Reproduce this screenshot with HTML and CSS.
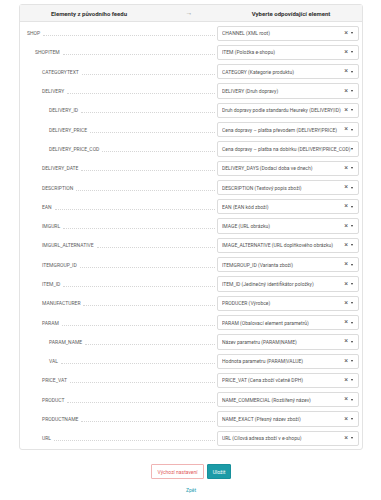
FILE: index.html
```html
<!DOCTYPE html>
<html lang="cs">
<head>
    <meta charset="UTF-8">
    <meta name="viewport" content="width=device-width, initial-scale=1.0">
    <title>Mapování feedu</title>
    <link rel="stylesheet" href="styles.css">
</head>
<body>
    <div class="page">
        <div class="card">
            <div class="card-head">
                <div>Elementy z původního feedu</div>
                <div class="head-arrow">&rarr;</div>
                <div>Vyberte odpovídající element</div>
            </div>
            <div class="rows">
                <div class="row"><div class="label lvl-0"><span>SHOP</span><i class="dots"></i></div><div class="pick"><span class="pick-text">CHANNEL (XML root)</span><b class="clear">&times;</b><b class="caret"></b></div></div>
                <div class="row"><div class="label lvl-1"><span>SHOPITEM</span><i class="dots"></i></div><div class="pick"><span class="pick-text">ITEM (Položka e-shopu)</span><b class="clear">&times;</b><b class="caret"></b></div></div>
                <div class="row"><div class="label lvl-2"><span>CATEGORYTEXT</span><i class="dots"></i></div><div class="pick"><span class="pick-text">CATEGORY (Kategorie produktu)</span><b class="clear">&times;</b><b class="caret"></b></div></div>
                <div class="row"><div class="label lvl-2"><span>DELIVERY</span><i class="dots"></i></div><div class="pick"><span class="pick-text">DELIVERY (Druh dopravy)</span><b class="clear">&times;</b><b class="caret"></b></div></div>
                <div class="row"><div class="label lvl-3"><span>DELIVERY_ID</span><i class="dots"></i></div><div class="pick"><span class="pick-text">Druh dopravy podle standardu Heureky (DELIVERY|ID)</span><b class="clear">&times;</b><b class="caret"></b></div></div>
                <div class="row"><div class="label lvl-3"><span>DELIVERY_PRICE</span><i class="dots"></i></div><div class="pick"><span class="pick-text">Cena dopravy – platba převodem (DELIVERY|PRICE)</span><b class="clear">&times;</b><b class="caret"></b></div></div>
                <div class="row"><div class="label lvl-3"><span>DELIVERY_PRICE_COD</span><i class="dots"></i></div><div class="pick pick-long"><span class="pick-text">Cena dopravy – platba na dobírku (DELIVERY|PRICE_COD)</span><b class="clear">&times;</b><b class="caret"></b></div></div>
                <div class="row"><div class="label lvl-2"><span>DELIVERY_DATE</span><i class="dots"></i></div><div class="pick"><span class="pick-text">DELIVERY_DAYS (Dodací doba ve dnech)</span><b class="clear">&times;</b><b class="caret"></b></div></div>
                <div class="row"><div class="label lvl-2"><span>DESCRIPTION</span><i class="dots"></i></div><div class="pick"><span class="pick-text">DESCRIPTION (Textový popis zboží)</span><b class="clear">&times;</b><b class="caret"></b></div></div>
                <div class="row"><div class="label lvl-2"><span>EAN</span><i class="dots"></i></div><div class="pick"><span class="pick-text">EAN (EAN kód zboží)</span><b class="clear">&times;</b><b class="caret"></b></div></div>
                <div class="row"><div class="label lvl-2"><span>IMGURL</span><i class="dots"></i></div><div class="pick"><span class="pick-text">IMAGE (URL obrázku)</span><b class="clear">&times;</b><b class="caret"></b></div></div>
                <div class="row"><div class="label lvl-2"><span>IMGURL_ALTERNATIVE</span><i class="dots"></i></div><div class="pick"><span class="pick-text">IMAGE_ALTERNATIVE (URL doplňkového obrázku)</span><b class="clear">&times;</b><b class="caret"></b></div></div>
                <div class="row"><div class="label lvl-2"><span>ITEMGROUP_ID</span><i class="dots"></i></div><div class="pick"><span class="pick-text">ITEMGROUP_ID (Varianta zboží)</span><b class="clear">&times;</b><b class="caret"></b></div></div>
                <div class="row"><div class="label lvl-2"><span>ITEM_ID</span><i class="dots"></i></div><div class="pick"><span class="pick-text">ITEM_ID (Jedinečný identifikátor položky)</span><b class="clear">&times;</b><b class="caret"></b></div></div>
                <div class="row"><div class="label lvl-2"><span>MANUFACTURER</span><i class="dots"></i></div><div class="pick"><span class="pick-text">PRODUCER (Výrobce)</span><b class="clear">&times;</b><b class="caret"></b></div></div>
                <div class="row"><div class="label lvl-2"><span>PARAM</span><i class="dots"></i></div><div class="pick"><span class="pick-text">PARAM (Obalovací element parametrů)</span><b class="clear">&times;</b><b class="caret"></b></div></div>
                <div class="row"><div class="label lvl-3"><span>PARAM_NAME</span><i class="dots"></i></div><div class="pick"><span class="pick-text">Název parametru (PARAM|NAME)</span><b class="clear">&times;</b><b class="caret"></b></div></div>
                <div class="row"><div class="label lvl-3"><span>VAL</span><i class="dots"></i></div><div class="pick"><span class="pick-text">Hodnota parametru (PARAM|VALUE)</span><b class="clear">&times;</b><b class="caret"></b></div></div>
                <div class="row"><div class="label lvl-2"><span>PRICE_VAT</span><i class="dots"></i></div><div class="pick"><span class="pick-text">PRICE_VAT (Cena zboží včetně DPH)</span><b class="clear">&times;</b><b class="caret"></b></div></div>
                <div class="row"><div class="label lvl-2"><span>PRODUCT</span><i class="dots"></i></div><div class="pick"><span class="pick-text">NAME_COMMERCIAL (Rozšířený název)</span><b class="clear">&times;</b><b class="caret"></b></div></div>
                <div class="row"><div class="label lvl-2"><span>PRODUCTNAME</span><i class="dots"></i></div><div class="pick"><span class="pick-text">NAME_EXACT (Přesný název zboží)</span><b class="clear">&times;</b><b class="caret"></b></div></div>
                <div class="row"><div class="label lvl-2"><span>URL</span><i class="dots"></i></div><div class="pick"><span class="pick-text">URL (Cílová adresa zboží v e-shopu)</span><b class="clear">&times;</b><b class="caret"></b></div></div>
            </div>
        </div>
        <div class="actions">
            <button class="btn btn-reset" type="button">Výchozí nastavení</button>
            <button class="btn btn-save" type="button">Uložit</button>
        </div>
        <a class="back" href="#">Zpět</a>
    </div>
</body>
</html>
```

FILE: styles.css
```css
body{
    margin: 0;
    background: #fff;
    font-family: Roboto, "Liberation Sans", sans-serif;
    color: #555;
}
.page{
    padding: 4px 18px 0 19px;
    display: flex;
    flex-direction: column;
    align-items: center;
}
.card{
    width: 344px;
    box-sizing: border-box;
    border: 1px solid #e3e3e3;
    border-radius: 3px;
    padding-bottom: 1px;
}
.card-head{
    display: grid;
    grid-template-columns: 138px 62px 1fr;
    height: 16px;
    align-items: center;
    text-align: center;
    background: #f5f5f5;
    border-bottom: 1px solid #e3e3e3;
    font-size: 6px;
    font-weight: 700;
    color: #333;
}
.head-arrow{
    font-weight: 400;
    color: #999;
    font-size: 7px;
}
.rows{
    padding-top: 1.5px;
}
.row{
    display: grid;
    grid-template-columns: 1fr 142px;
    column-gap: 2px;
    padding: 2px 3px 2px 0;
}
.label{
    display: flex;
    align-items: center;
    font-size: 5px;
    color: #5f5f5f;
}
.lvl-0{ padding-left: 7px; }
.lvl-1{ padding-left: 15px; }
.lvl-2{ padding-left: 22px; }
.lvl-3{ padding-left: 29px; }
.dots{
    flex: 1;
    margin: 5px 0 0 3px;
    border-bottom: 1px dotted #d6d6d6;
}
.pick{
    height: 15.3px;
    box-sizing: border-box;
    border: 1px solid #dcdcdc;
    border-radius: 2px;
    display: flex;
    align-items: center;
    padding: 0 5px 0 4px;
    font-size: 5px;
    color: #555;
}
.pick-text{
    flex: 1;
    min-width: 0;
    white-space: nowrap;
    overflow: hidden;
}
.clear{
    font-weight: 400;
    font-size: 7px;
    line-height: 1;
    color: #555;
    margin: 0 3px 0 1px;
}
.caret{
    width: 0;
    height: 0;
    border-left: 1.8px solid transparent;
    border-right: 1.8px solid transparent;
    border-top: 2.4px solid #333;
}
.pick-long .pick-text{
    overflow: visible;
}
.pick-long .clear{
    visibility: hidden;
}
.actions{
    display: flex;
    gap: 3px;
    margin-top: 14px;
}
.btn{
    height: 15px;
    font-family: inherit;
    font-size: 5px;
    border-radius: 1px;
    padding: 0 4px;
    margin: 0;
}
.btn-reset{
    width: 53px;
    background: #fff;
    border: 1px solid #f0b4b4;
    color: #e25b5b;
}
.btn-save{
    width: 24px;
    background: #1c9ba7;
    border: 1px solid #17909b;
    color: #fff;
}
.back{
    margin-top: 8px;
    font-size: 5px;
    color: #2aa0b3;
    text-decoration: none;
}
```
